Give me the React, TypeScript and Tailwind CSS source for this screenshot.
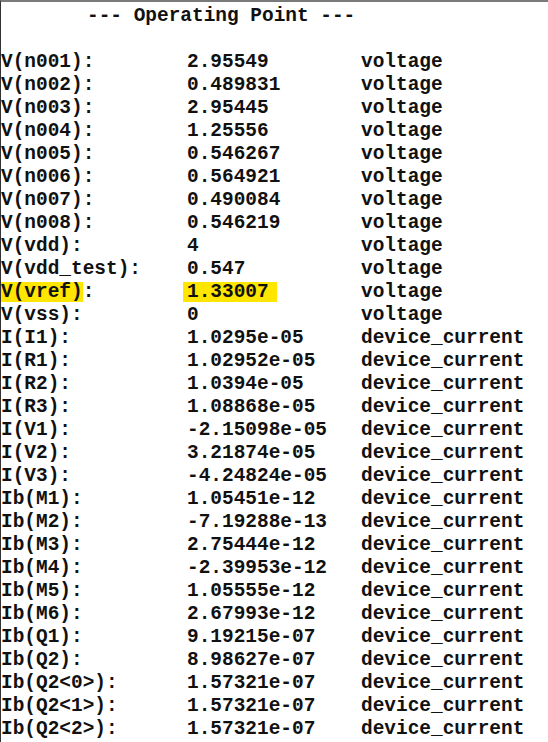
import React from 'react';

type Row = [string, string, string];

const rows: Row[] = [
  ['V(n001):', '2.95549', 'voltage'],
  ['V(n002):', '0.489831', 'voltage'],
  ['V(n003):', '2.95445', 'voltage'],
  ['V(n004):', '1.25556', 'voltage'],
  ['V(n005):', '0.546267', 'voltage'],
  ['V(n006):', '0.564921', 'voltage'],
  ['V(n007):', '0.490084', 'voltage'],
  ['V(n008):', '0.546219', 'voltage'],
  ['V(vdd):', '4', 'voltage'],
  ['V(vdd_test):', '0.547', 'voltage'],
  ['V(vref):', '1.33007', 'voltage'],
  ['V(vss):', '0', 'voltage'],
  ['I(I1):', '1.0295e-05', 'device_current'],
  ['I(R1):', '1.02952e-05', 'device_current'],
  ['I(R2):', '1.0394e-05', 'device_current'],
  ['I(R3):', '1.08868e-05', 'device_current'],
  ['I(V1):', '-2.15098e-05', 'device_current'],
  ['I(V2):', '3.21874e-05', 'device_current'],
  ['I(V3):', '-4.24824e-05', 'device_current'],
  ['Ib(M1):', '1.05451e-12', 'device_current'],
  ['Ib(M2):', '-7.19288e-13', 'device_current'],
  ['Ib(M3):', '2.75444e-12', 'device_current'],
  ['Ib(M4):', '-2.39953e-12', 'device_current'],
  ['Ib(M5):', '1.05555e-12', 'device_current'],
  ['Ib(M6):', '2.67993e-12', 'device_current'],
  ['Ib(Q1):', '9.19215e-07', 'device_current'],
  ['Ib(Q2):', '8.98627e-07', 'device_current'],
  ['Ib(Q2<0>):', '1.57321e-07', 'device_current'],
  ['Ib(Q2<1>):', '1.57321e-07', 'device_current'],
  ['Ib(Q2<2>):', '1.57321e-07', 'device_current'],
];

const Hl: React.FC<{ children: React.ReactNode; className?: string }> = ({ children, className }) => (
  <span className={`bg-[#ffe600] inline-block h-[20px] leading-[20px] ${className ?? ''}`}>{children}</span>
);

export default function App() {
  return (
    <div className="w-[548px] h-[742px] bg-white overflow-hidden border-t-2 border-[#7a7a7a] border-l border-l-[#333] pt-[3px] font-['Liberation_Mono','Courier_New',monospace] font-bold text-[19.45px] leading-[23px] text-[#111] whitespace-pre">
      <div className="pl-[86px]">--- Operating Point ---</div>
      <div className="h-[23px]" />
      {rows.map(([name, value, kind]) => {
        const hot = name === 'V(vref):';
        return (
          <div key={name} className="grid grid-cols-[186px_174px_1fr] items-center h-[23px]">
            <div>
              {hot ? (
                <>
                  <Hl>V(vref)</Hl>:
                </>
              ) : (
                name
              )}
            </div>
            <div>{hot ? <Hl className="-ml-[4px] pl-[4px] pr-[8px]">{value}</Hl> : value}</div>
            <div>{kind}</div>
          </div>
        );
      })}
    </div>
  );
}
